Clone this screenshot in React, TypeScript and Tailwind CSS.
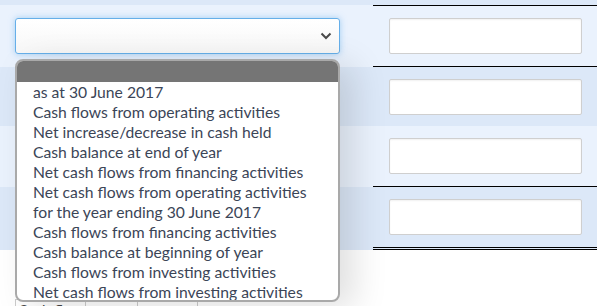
const options = [
  "as at 30 June 2017",
  "Cash flows from operating activities",
  "Net increase/decrease in cash held",
  "Cash balance at end of year",
  "Net cash flows from financing activities",
  "Net cash flows from operating activities",
  "for the year ending 30 June 2017",
  "Cash flows from financing activities",
  "Cash balance at beginning of year",
  "Cash flows from investing activities",
  "Net cash flows from investing activities",
];

const rows = [
  { bg: "bg-[#eaf2fd]", h: "h-[62px]", line: "border-t border-b border-black", focus: true },
  { bg: "bg-[#dce8f8]", h: "h-[59px]", line: "", focus: false },
  { bg: "bg-[#eaf2fd]", h: "h-[61px]", line: "border-b border-black", focus: false },
  { bg: "bg-[#dce8f8]", h: "h-[63px]", line: "border-b-[3px] border-double border-black", focus: false },
];

function Chevron() {
  return (
    <svg viewBox="0 0 12 8" className="h-[8px] w-[12px]" fill="none" stroke="#4a4a4a" strokeWidth="2">
      <path d="M1.5 1.5 6 6l4.5-4.5" />
    </svg>
  );
}

function SelectBox({ focus }: { focus: boolean }) {
  return (
    <div
      className={
        focus
          ? "flex h-[36px] w-[325px] items-center justify-end rounded-[3px] border border-[#66afe9] bg-gradient-to-b from-white to-[#f7f7f7] pr-[7px] shadow-[0_0_6px_rgba(102,175,233,0.55)]"
          : "flex h-[36px] w-[325px] items-center justify-end rounded-[3px] border border-[#c8c8c8] bg-white pr-[7px]"
      }
    >
      <Chevron />
    </div>
  );
}

export default function App() {
  return (
    <div className="relative h-[306px] w-[597px] overflow-hidden bg-white font-['Lato','Liberation_Sans',sans-serif]">
      <div className="h-[5px] bg-[#dce8f8]" />
      {rows.map((r, i) => (
        <div key={i} className={`flex ${r.bg}`}>
          <div className={`flex ${r.h} w-[373px] items-center pl-[15px]`}>
            <SelectBox focus={r.focus} />
          </div>
          <div className={`flex ${r.h} flex-1 items-center pl-[16px] pr-[15px] ${r.line}`}>
            <div className="h-[36px] w-full rounded-[2px] border border-[#cfcfcf] bg-white shadow-[inset_0_1px_2px_rgba(0,0,0,0.06)]" />
          </div>
        </div>
      ))}
      <div className="mt-[49px] flex pl-[15px] text-[15px] leading-[20px] text-[#444]">
        <div className="h-[26px] border border-[#ccc] px-[2px]">Cash flow</div>
        <div className="h-[26px] w-[52px] border border-l-0 border-[#ccc]" />
        <div className="h-[26px] w-[60px] border border-l-0 border-[#ccc]" />
      </div>

      <div className="absolute left-[15px] top-[59px] h-[243px] w-[325px] overflow-hidden rounded-[8px] border-2 border-[#a9a9a9] bg-white shadow-[14px_6px_34px_rgba(0,0,0,0.13)]">
        <div className="h-[21px] bg-[#757575]" />
        {options.map((o) => (
          <div key={o} className="h-[20px] whitespace-nowrap pl-[16px] text-[15.7px] leading-[20px] text-[#3b4557]">
            {o}
          </div>
        ))}
      </div>
    </div>
  );
}
